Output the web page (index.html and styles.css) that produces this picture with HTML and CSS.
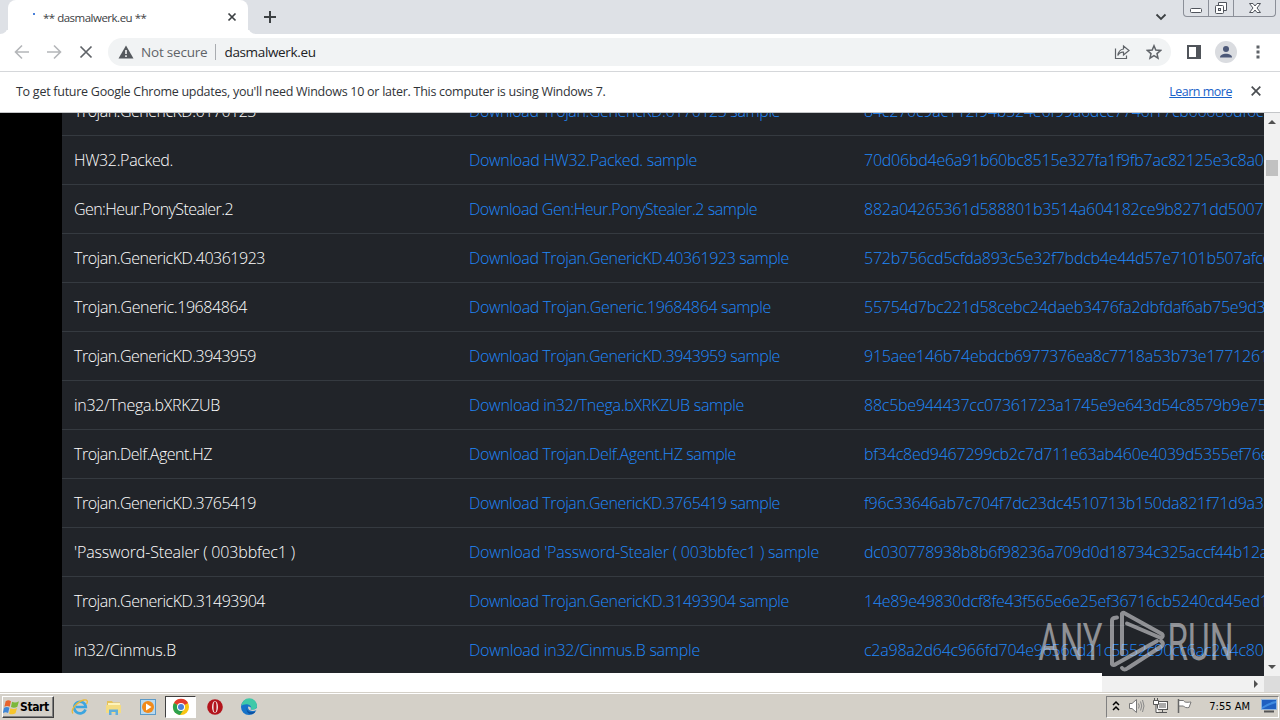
FILE: index.html
```html
<!DOCTYPE html>
<html lang="en">
<head>
    <meta charset="UTF-8">
    <meta name="viewport" content="width=device-width, initial-scale=1.0">
    <title>** dasmalwerk.eu **</title>
    <link rel="stylesheet" href="styles.css">
</head>
<body>
    <div class="tabbar">
        <div class="tab-edge"></div>
        <div class="tab">
            <span class="loading-dot"></span>
            <span class="tab-title">** dasmalwerk.eu **</span>
            <svg class="tab-close" width="10" height="10" viewBox="0 0 10 10"><path d="M1.5 1.5l7 7M8.5 1.5l-7 7" stroke="#3c4043" stroke-width="1.7"/></svg>
        </div>
        <div class="tab-rest">
            <svg class="new-tab" width="14" height="14" viewBox="0 0 14 14"><path d="M7 1v12M1 7h12" stroke="#3c4043" stroke-width="2"/></svg>
            <svg class="tab-search" width="12" height="8" viewBox="0 0 12 8"><path d="M1.5 1.5L6 6l4.5-4.5" fill="none" stroke="#3c4043" stroke-width="1.8"/></svg>
            <div class="window-buttons">
                <span class="win-btn win-min"><svg width="14" height="16" viewBox="0 0 14 16"><rect x="1.5" y="8.5" width="11" height="4" rx="1" fill="#fff" stroke="#50545c"/></svg></span>
                <span class="win-btn win-max"><svg width="14" height="16" viewBox="0 0 14 16"><path d="M4.5 2.5h8v8h-8z" fill="#fff" stroke="#50545c"/><rect x="1.5" y="5.5" width="8" height="8" rx="1" fill="#fff" stroke="#50545c"/><rect x="4.5" y="8.5" width="2" height="2" fill="#dee1e6" stroke="#50545c"/></svg></span>
                <span class="win-btn win-close"><svg width="14" height="16" viewBox="0 0 14 16"><path d="M1.5 3.5H5l2 2.5 2-2.5h3.5L9 8l3.500 4.500H9L7 10l-2 2.500H1.500L5 8z" fill="#fff" stroke="#50545c"/></svg></span>
            </div>
        </div>
    </div>

    <div class="toolbar">
        <svg class="nav-icon" width="16" height="16" viewBox="0 0 16 16"><path d="M15 8H2M8 1.500L1.500 8 8 14.500" fill="none" stroke="#b4b6b9" stroke-width="1.600"/></svg>
        <svg class="nav-icon" width="16" height="16" viewBox="0 0 16 16"><path d="M1 8h13M8 1.500L14.500 8 8 14.500" fill="none" stroke="#b4b6b9" stroke-width="1.600"/></svg>
        <svg class="nav-icon" width="16" height="16" viewBox="0 0 16 16"><path d="M2.500 2.500l11 11M13.500 2.500l-11 11" stroke="#5f6368" stroke-width="1.700"/></svg>
        <div class="omnibox">
            <svg width="16" height="14" viewBox="0 0 16 14"><path d="M8 0.500L15.500 13.500H0.500z" fill="#55595e"/><path d="M8 5v4M8 10.300v1.700" stroke="#fff" stroke-width="1.500"/></svg>
            <span class="not-secure">Not secure</span>
            <span class="omni-sep"></span>
            <span class="omni-url">dasmalwerk.eu</span>
            <svg class="share" width="16" height="16" viewBox="0 0 16 16"><path d="M1.500 4.500v10h11v-3M9.500 5V2l5.500 4.500L9.500 11V8.200C7 8 5 9 3.800 11.500 4.300 8 6 5.500 9.500 5z" fill="none" stroke="#5f6368" stroke-width="1.200"/></svg>
            <svg class="star" width="16" height="16" viewBox="0 0 16 16"><path d="M8 1.800l1.800 4.300 4.700.4-3.500 3.100 1 4.500L8 11.700l-4 2.400 1-4.500L1.500 6.500l4.700-.4z" fill="none" stroke="#5f6368" stroke-width="1.500"/></svg>
        </div>
        <svg class="side-panel" width="14" height="14" viewBox="0 0 14 14"><rect x="1" y="1" width="12" height="12" fill="none" stroke="#50545a" stroke-width="2"/><path d="M9 1h4v12H9z" fill="#50545a"/></svg>
        <span class="avatar"><svg width="14" height="14" viewBox="0 0 14 14"><circle cx="7" cy="4" r="3" fill="#4c5878"/><path d="M1 12.500c0-5 12-5 12 0z" fill="#4c5878"/></svg></span>
        <svg class="menu-dots" width="4" height="14" viewBox="0 0 4 14"><path d="M.5.500h3v3h-3zM.5 5.500h3v3h-3zM.5 10.500h3v3h-3z" fill="#5f6368"/></svg>
    </div>

    <div class="infobar">
        <span class="info-text">To get future Google Chrome updates, you'll need Windows 10 or later. This computer is using Windows 7.</span>
        <a href="#" class="learn-more">Learn more</a>
        <svg width="10" height="10" viewBox="0 0 10 10"><path d="M.7.700l8.600 8.600M9.300.700L.7 9.300" stroke="#4a4d51" stroke-width="1.700"/></svg>
    </div>

    <div class="view">
        <div class="page">
            <table>
                <tbody id="samples"></tbody>
            </table>
        </div>
        <div class="scroll-y">
            <span class="arrow-up"></span>
            <span class="thumb"></span>
            <span class="arrow-down"></span>
        </div>
        <svg class="watermark" width="200" height="66" viewBox="0 0 200 66">
            <text x="1.500" y="51.500" textLength="64" lengthAdjust="spacingAndGlyphs">ANY</text>
            <text x="130.500" y="51.500" textLength="66" lengthAdjust="spacingAndGlyphs">RUN</text>
            <path d="M80 9.500l-3 .5q-2 .5-2 3V56q1 2 4 0L120 33M85 46V5.500q1-1.500 3 0L125 26q2 2-1 4L90 15.500M85 60q2 3 6 0L125 38q2-3-1-5"/>
        </svg>
    </div>
    <div class="bottom">
        <div class="status"></div>
        <div class="scroll-x"><span class="arrow-right"></span></div>
        <div class="corner"></div>
    </div>

    <div class="taskbar">
        <div class="start">
            <svg width="17" height="17" viewBox="0 0 16 16"><path d="M2.500 2c2-1.200 3.500-.8 5 0L6.300 7.200c-1.600-.9-3-1-5 0z" fill="#e8632c"/><path d="M8.500 2.500c2 1 4 1 6.500-.5l-1.500 5.200c-2 1.200-4 1.300-6 .3z" fill="#7cb83a"/><path d="M1 8.200c2-1 3.500-.8 5 0L4.800 13.200c-1.600-.9-3-1-5 0z" fill="#3f86d6"/><path d="M7 8.700c2 1 4 1 6.200-.3L11.800 13.500c-2 1.200-4 1.200-6.100.3z" fill="#f6c52c"/></svg>
            <span>Start</span>
        </div>
        <div class="task"><svg width="18" height="18" viewBox="0 0 18 18"><path d="M14.500 11.500A5.800 5.800 0 1 1 14.800 9H5" fill="none" stroke="#3da5df" stroke-width="2.600"/><path d="M2 15.500C-1 12 6 3.500 13 2c3.500-.7 4 1.500 2.500 4" fill="none" stroke="#e9b93a" stroke-width="1.300"/></svg></div>
        <div class="task"><svg width="18" height="18" viewBox="0 0 18 18"><path d="M2 3h5l1 1.500h7V14H2z" fill="#e5c15a"/><path d="M3 5h12v3H3z" fill="#fdf3bb"/><path d="M1 7h15v8H1z" fill="#f4dc82"/><path d="M4 17v-5.500h9V17h-2.500v-3h-4v3z" fill="#61aedb"/></svg></div>
        <div class="task"><svg width="18" height="18" viewBox="0 0 18 18"><rect x="1.500" y="1.500" width="15" height="15" fill="#b9d9ef" stroke="#5b9ac8"/><circle cx="9" cy="9" r="6" fill="#f28a1a"/><path d="M7 5.500v7l5.500-3.500z" fill="#fff"/></svg></div>
        <div class="task active"><svg width="18" height="18" viewBox="0 0 18 18"><circle cx="9" cy="9" r="8" fill="#f9c513"/><path d="M9 9L2 5a8 8 0 0 1 14 0z" fill="#e33b2e"/><path d="M9 9L2 5a8 8 0 0 0 6 12l4-6z" fill="#2da14c"/><circle cx="9" cy="9" r="4" fill="#fff"/><circle cx="9" cy="9" r="3" fill="#4a80d9"/></svg></div>
        <div class="task"><svg width="18" height="18" viewBox="0 0 18 18"><circle cx="9" cy="9" r="7.800" fill="#b3141c"/><ellipse cx="9" cy="9" rx="3" ry="6" fill="#f3e6e4"/><ellipse cx="9" cy="9" rx="1.500" ry="5.500" fill="#b3141c"/></svg></div>
        <div class="task"><svg width="18" height="18" viewBox="0 0 18 18"><circle cx="9" cy="9" r="8" fill="#1673c9"/><path d="M1.500 8A7.700 7.700 0 0 1 17 8c.3 3-3 4.500-6.500 3.500C12 10 11 7 8 6.500 5 6 2.500 7 1.500 8z" fill="#3fc9a8"/><path d="M7 9c-1 4 3 6.500 8.500 4.500C12 18.500 5 16 7 9z" fill="#0d4f9e"/><path d="M8.200 8.500c-.8 3 2 4.500 5 4.500l4.800-1-1-2c-2.500 2-5 2-6.500 1.500 1-1.500 0-3-2.300-3z" fill="#d4d0c8"/></svg></div>
        <div class="tray">
            <svg width="8" height="12" viewBox="0 0 8 12"><path d="M1 5l3-3 3 3M1 10l3-3 3 3" fill="none" stroke="#000" stroke-width="1.500"/></svg>
            <svg class="volume" width="17" height="16" viewBox="0 0 17 16"><path d="M1.500 5.500H4L8.500 1.500v13L4 10.500H1.500z" fill="#fff" stroke="#777"/><path d="M10.500 5.500q1.500 2.500 0 5M12.500 3.500q2.500 4.500 0 9M14.500 2q3 6 0 12" fill="none" stroke="#888"/></svg>
            <svg class="network" width="17" height="16" viewBox="0 0 17 16"><rect x="5.500" y="3.500" width="10" height="8" fill="#aaa" stroke="#555"/><path d="M6.500 4.500h8v6h-8z" fill="none" stroke="#fff"/><path d="M7 14.500h8M10.500 12v2" stroke="#555"/><path d="M1.500 2.500h5v4h-5zM4 7v7.500h3M2.500 0v2M5.500 0v2" fill="#fff" stroke="#555"/></svg>
            <svg class="flag" width="17" height="16" viewBox="0 0 17 16"><path d="M2.500 2.500h5c1 2 3 2 7.500 1.500l-2 5.500c-2.500.5-4.500 0-5.500-1.500H2.500z" fill="#fff" stroke="#777"/><path d="M2.500 1v14" stroke="#666" stroke-width="1.500"/></svg>
            <span class="clock">7:55 AM</span>
            <svg class="desktop" width="16" height="14" viewBox="0 0 16 14"><path d="M.5.500h15v10H.5z" fill="#1f5fc0" stroke="#8fb5e0"/><path d="M1 8q7-5 14-6v2Q8 6 1 10z" fill="#3f8be0"/><path d="M3 12.500h10" stroke="#555" stroke-width="2"/></svg>
        </div>
    </div>

    <script>
        // name, width of the name in px, hash
        const samples = [
            ['Trojan.GenericKD.6170123', 182, '84c270c9ac112f94b324e6f99a6dcc7746f17cb66680df6c'],
            ['HW32.Packed.', 99, '70d06bd4e6a91b60bc8515e327fa1f9fb7ac82125e3c8a06d'],
            ['Gen:Heur.PonyStealer.2', 159, '882a04265361d588801b3514a604182ce9b8271dd5007'],
            ['Trojan.GenericKD.40361923', 191, '572b756cd5cfda893c5e32f7bdcb4e44d57e7101b507afcc'],
            ['Trojan.Generic.19684864', 173, '55754d7bc221d58cebc24daeb3476fa2dbfdaf6ab75e9d3a'],
            ['Trojan.GenericKD.3943959', 182, '915aee146b74ebdcb6977376ea8c7718a53b73e1771261'],
            ['in32/Tnega.bXRKZUB', 146, '88c5be944437cc07361723a1745e9e643d54c8579b9e75'],
            ['Trojan.Delf.Agent.HZ', 138, 'bf34c8ed9467299cb2c7d711e63ab460e4039d5355ef76e'],
            ['Trojan.GenericKD.3765419', 182, 'f96c33646ab7c704f7dc23dc4510713b150da821f71d9a3'],
            ["'Password-Stealer ( 003bbfec1 )", 221, 'dc030778938b8b6f98236a709d0d18734c325accf44b12a'],
            ['Trojan.GenericKD.31493904', 191, '14e89e49830dcf8fe43f565e6e25ef36716cb5240cd45ed1'],
            ['in32/Cinmus.B', 102, 'c2a98a2d64c966fd704e9656cd21c5552c90cc6ac2d4c80']
        ];

        function fit(el, width) {
            const extra = el.getBoundingClientRect().width - width;
            el.style.letterSpacing = (-extra / el.textContent.length) + 'px';
        }

        function addCell(row, tag, text) {
            const el = document.createElement(tag);
            if (tag === 'a') el.href = '#';
            el.textContent = text;
            row.insertCell().appendChild(el);
            return el;
        }

        const body = document.getElementById('samples');
        samples.forEach(([name, width, hash]) => {
            const row = body.insertRow();
            const title = addCell(row, 'span', name);
            const download = addCell(row, 'a', 'Download ' + name + ' sample');
            addCell(row, 'a', hash);
            fit(title, width);
            fit(download, width + 129);
        });
    </script>
</body>
</html>
```
FILE: styles.css
```css
* {
    box-sizing: border-box;
}

body {
    margin: 0;
    width: 1280px;
    height: 720px;
    overflow: hidden;
    font-family: "Open Sans", "Noto Sans", sans-serif;
    background-color: #fff;
}

svg {
    display: block;
    flex: none;
}

.tabbar {
    display: flex;
    height: 34px;
    background-color: #fff;
}

.tab-edge {
    width: 8px;
    background-color: #dee1e6;
    border-bottom-right-radius: 8px;
}

.tab {
    display: flex;
    align-items: center;
    width: 240px;
    padding: 0 11px 0 24px;
    background-color: #fff;
    border-radius: 8px 8px 0 0;
    box-shadow: 0 -8px 0 #dee1e6, 4px -4px 0 #dee1e6, -4px -4px 0 #dee1e6;
    z-index: 1;
}

.loading-dot {
    width: 2px;
    height: 2px;
    margin: -6px 8px 0 1px;
    background-color: #4a80d9;
}

.tab-title {
    font-size: 11.5px;
    letter-spacing: -0.5px;
    color: #3c4043;
}

.tab-close {
    margin-left: auto;
}

.tab-rest {
    display: flex;
    flex: 1;
    background-color: #dee1e6;
    border-bottom-left-radius: 8px;
}

.new-tab {
    margin: 10px 0 0 15px;
}

.tab-search {
    margin: 13px 16px 0 auto;
}

.window-buttons {
    display: flex;
    width: 93px;
    height: 17px;
    margin-right: 4px;
    border: 1px solid #8b8f98;
    border-top: none;
    border-radius: 0 0 4px 4px;
}

.win-btn {
    display: flex;
    justify-content: center;
    width: 25px;
    border-right: 1px solid #8b8f98;
}

.win-close {
    flex: 1;
    border-right: none;
}

.toolbar {
    display: flex;
    align-items: center;
    height: 38px;
    padding: 0 20px 1px 14px;
    border-bottom: 1px solid #d5d7da;
}

.nav-icon {
    margin-right: 16px;
}

.omnibox {
    display: flex;
    align-items: center;
    width: 1063px;
    height: 28px;
    margin-left: -2px;
    padding: 0 9px 0 10px;
    border-radius: 14px;
    background-color: #f1f3f4;
    font-size: 13.5px;
}

.not-secure {
    margin-left: 7px;
    letter-spacing: -0.2px;
    color: #5f6368;
}

.omni-sep {
    width: 1px;
    height: 16px;
    margin: 0 8px;
    background-color: #a9acb0;
}

.omni-url {
    letter-spacing: -0.35px;
    color: #202124;
}

.share {
    margin-left: auto;
}

.star {
    margin-left: 16px;
}

.side-panel {
    margin-left: 16px;
}

.avatar {
    display: flex;
    align-items: center;
    justify-content: center;
    width: 22px;
    height: 22px;
    margin-left: 14px;
    border-radius: 50%;
    background-color: #dadce0;
}

.menu-dots {
    margin-left: auto;
}

.infobar {
    display: flex;
    align-items: center;
    height: 41px;
    padding: 0 19px 2px 16px;
    border-bottom: 1px solid #c4c6c8;
    font-size: 12.5px;
    letter-spacing: -0.265px;
    color: #303338;
}

.learn-more {
    margin: 0 19px 0 auto;
    letter-spacing: -0.5px;
    color: #1a62c9;
}

.view {
    position: relative;
    display: flex;
    height: 560px;
}

.page {
    width: 1264px;
    height: 560px;
    padding-left: 62px;
    overflow: hidden;
    background-color: #000;
}

.page table {
    width: 1700px;
    margin-top: -27px;
    border-collapse: collapse;
    table-layout: fixed;
    background-color: #212429;
    color: #fff;
}

.page td {
    width: 395px;
    height: 49px;
    padding: 1px 12px 0;
    border-bottom: 1px solid #353a40;
    font-size: 16px;
    font-weight: 300;
    white-space: nowrap;
}

.page td:last-child {
    width: auto;
    letter-spacing: -0.23px;
}

.page td a {
    color: #2088fa;
    text-decoration: none;
}

.scroll-y {
    display: flex;
    flex-direction: column;
    align-items: center;
    width: 16px;
    background-color: #f1f1f1;
}

.arrow-up {
    margin-top: 7px;
    border: 4px solid transparent;
    border-top: none;
    border-bottom-color: #505050;
}

.thumb {
    width: 12px;
    height: 16px;
    margin-top: 36px;
    background-color: #c1c1c1;
}

.arrow-down {
    margin: auto 0 4px;
    border: 4px solid transparent;
    border-bottom: none;
    border-top-color: #505050;
}

.watermark {
    position: absolute;
    left: 1037px;
    top: 495px;
    opacity: 0.6;
}

.watermark text {
    fill: #d8d9dc;
    font: 400 52px Roboto, sans-serif;
}

.watermark path {
    fill: none;
    stroke: #d8d9dc;
    stroke-width: 4px;
    stroke-linejoin: round;
    stroke-linecap: round;
}

.bottom {
    display: flex;
    height: 19px;
}

.status {
    width: 1102px;
    background-color: #fff;
}

.scroll-x {
    display: flex;
    align-items: center;
    justify-content: flex-end;
    width: 162px;
    padding-right: 6px;
    border-top: 3px solid #212429;
    background-color: #f1f1f1;
}

.arrow-right {
    border: 4px solid transparent;
    border-right: none;
    border-left-color: #505050;
}

.corner {
    width: 16px;
    border-top: 3px solid #f1f1f1;
    background-color: #dcdcdc;
}

.taskbar {
    display: flex;
    align-items: center;
    height: 28px;
    padding: 1px 1px 0 2px;
    border-top: 1px solid #d4d0c8;
    background-color: #d4d0c8;
    box-shadow: inset 0 1px 0 #fff;
}

.start {
    display: flex;
    align-items: center;
    width: 52px;
    height: 22px;
    margin-right: 10px;
    border: 1px solid;
    border-color: #fff #404040 #404040 #fff;
    box-shadow: inset -1px -1px 0 #808080;
    font: bold 12px "DejaVu Sans Condensed", sans-serif;
    color: #000;
}

.start span {
    letter-spacing: -0.4px;
}

.task {
    display: flex;
    align-items: center;
    justify-content: center;
    width: 31px;
    height: 22px;
    margin-right: 3px;
}

.task.active {
    margin-left: -1px;
    border: 1px solid;
    border-color: #404040 #fff #fff #404040;
    background-color: #fff;
}

.tray {
    display: flex;
    align-items: center;
    width: 173px;
    height: 22px;
    margin-left: auto;
    padding: 0 1px 2px 5px;
    border: 1px solid;
    border-color: #808080 #fff #fff #808080;
}

.volume {
    margin-left: 8px;
}

.network,
.flag {
    margin-left: 7px;
}

.clock {
    margin-left: auto;
    padding-top: 1px;
    font: 11px "DejaVu Sans Condensed", sans-serif;
    color: #000;
}

.desktop {
    margin-left: 11px;
}
```
